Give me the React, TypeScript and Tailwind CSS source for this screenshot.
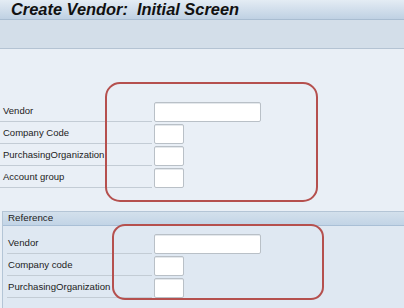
import React from 'react';

const font = { fontFamily: '"Liberation Sans", Arial, sans-serif' };

function Field({ wide }: { wide?: boolean }) {
  return (
    <div
      className={`ml-[2px] h-[20px] rounded-[2px] border border-[#b9c0c7] bg-white shadow-[inset_0_1px_0_#e4e8ec] ${
        wide ? 'w-[107px]' : 'w-[30px]'
      }`}
    />
  );
}

function Row({ label, wide, inFrame }: { label: string; wide?: boolean; inFrame?: boolean }) {
  return (
    <div className="flex h-[21px] items-center">
      <div
        className={`flex h-full items-center border-b border-[#c3ccd5] text-[#222] ${
          inFrame ? 'ml-[4px] w-[145px] pl-[1px] text-[9.6px]' : 'w-[152px] pl-[3px] text-[9.5px]'
        }`}
      >
        {label}
      </div>
      <Field wide={wide} />
    </div>
  );
}

export default function App() {
  return (
    <div className="relative h-[308px] w-[404px] overflow-hidden bg-[#e9eff6]" style={font}>
      {/* title */}
      <div className="flex h-[20px] items-center border-b border-[#a9bdd1] bg-gradient-to-b from-[#e4ecf4] to-[#bfd1e3] pl-[11px]">
        <span className="text-[16.4px] font-bold italic leading-none text-[#111]">
          Create Vendor:&nbsp; Initial Screen
        </span>
      </div>

      {/* toolbar */}
      <div className="h-[29px] border-b border-[#b4c3d3] bg-[#d3dee9]" />

      {/* main fields */}
      <div className="flex flex-col gap-[1px] pt-[52px]">
        <Row label="Vendor" wide />
        <Row label="Company Code" />
        <Row label="PurchasingOrganization" />
        <Row label="Account group" />
      </div>

      {/* reference frame */}
      <div className="ml-[2px] mt-[23px] border-l border-t border-[#b4c5d6] bg-[#dfe8f2]">
        <div className="flex h-[14px] items-center border-b border-[#a9bfd6] bg-gradient-to-b from-[#d3e0ec] to-[#c2d4e6] pl-[5px] text-[9.8px] text-[#222]">
          Reference
        </div>
        <div className="flex flex-col gap-[1px] pb-[12px] pt-[7px]">
          <Row label="Vendor" wide inFrame />
          <Row label="Company code" inFrame />
          <Row label="PurchasingOrganization" inFrame />
        </div>
      </div>

      {/* annotation outlines */}
      <div className="absolute left-[105px] top-[82px] h-[120px] w-[213px] rounded-[15px] border-2 border-[#b5504e]" />
      <div className="absolute left-[112px] top-[224px] h-[76px] w-[212px] rounded-[13px] border-2 border-[#b5504e]" />
    </div>
  );
}
